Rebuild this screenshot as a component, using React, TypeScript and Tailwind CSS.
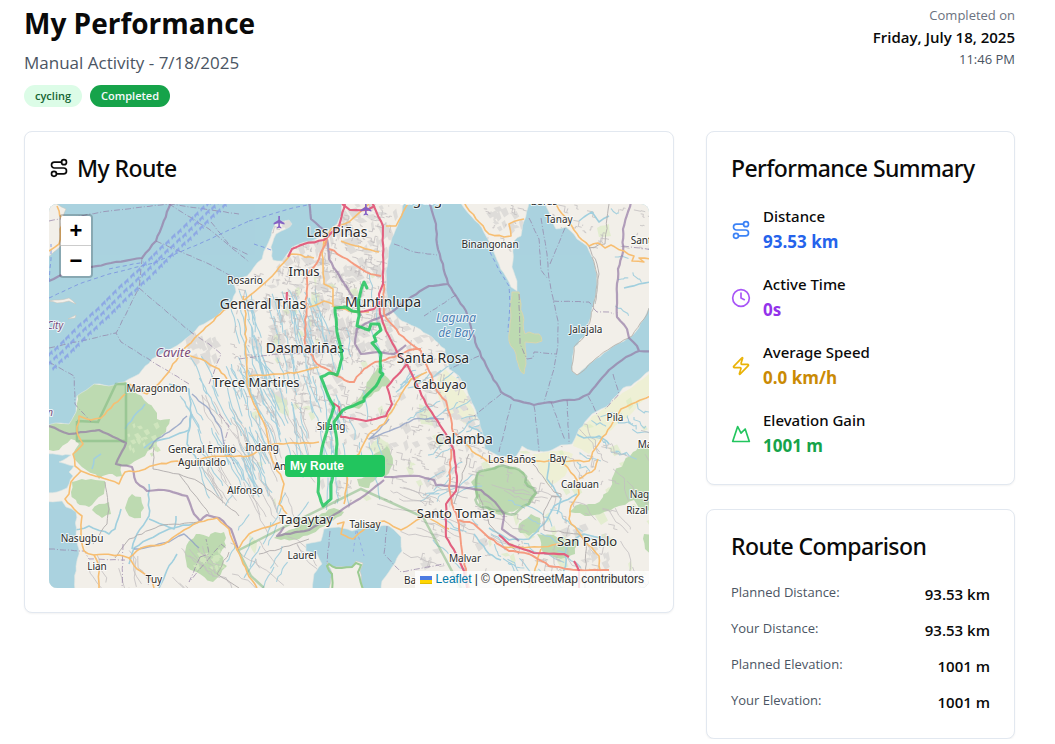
import React from "react";
import { Clock, Route, Zap } from "lucide-react";

type Point = [number, number];

function seeded(seed: number) {
  let s = seed;
  return () => {
    s = (s * 16807) % 2147483647;
    return s / 2147483647;
  };
}

function parse(points: string): Point[] {
  return points.split(" ").map((p) => p.split(",").map(Number) as Point);
}

/* Subdivides a polyline and shakes the new vertices, for coasts and roads. */
function rough(points: string, amount = 1.2, closed = false): string {
  const pts = parse(points);
  const rnd = seeded(pts.length * 977 + Math.round(Math.abs(pts[0][0] * 31 + pts[0][1] * 7)) + 11);
  const out: string[] = [];
  const count = closed ? pts.length : pts.length - 1;
  for (let i = 0; i < count; i++) {
    const [x1, y1] = pts[i];
    const [x2, y2] = pts[(i + 1) % pts.length];
    const steps = Math.max(1, Math.round(Math.hypot(x2 - x1, y2 - y1) / 5));
    for (let k = 0; k < steps; k++) {
      const t = k / steps;
      const j = k === 0 ? 0 : amount;
      out.push(`${(x1 + (x2 - x1) * t + (rnd() - 0.5) * 2 * j).toFixed(1)},${(y1 + (y2 - y1) * t + (rnd() - 0.5) * 2 * j).toFixed(1)}`);
    }
  }
  if (!closed) out.push(pts[pts.length - 1].join(","));
  return `M${out.join("L")}${closed ? "Z" : ""}`;
}

/* Short wandering strokes inside a box, heading roughly along (dx, dy). */
function strokes(seed: number, n: number, box: number[], dx: number, dy: number, steps: number, spread: number): string {
  const rnd = seeded(seed * 7919);
  const [x0, y0, x1, y1] = box;
  let d = "";
  for (let i = 0; i < n; i++) {
    let x = x0 + rnd() * (x1 - x0);
    let y = y0 + rnd() * (y1 - y0);
    d += `M${x.toFixed(1)},${y.toFixed(1)}`;
    for (let k = 0; k < steps; k++) {
      x += dx + (rnd() - 0.5) * spread;
      y += dy + (rnd() - 0.5) * spread;
      d += `L${x.toFixed(1)},${y.toFixed(1)}`;
    }
  }
  return d;
}

/* Right-angled street fragments for built-up districts. */
function streets(seed: number, n: number, box: number[], size: number): string {
  const rnd = seeded(seed * 7919);
  const [x0, y0, x1, y1] = box;
  let d = "";
  for (let i = 0; i < n; i++) {
    const x = x0 + rnd() * (x1 - x0);
    const y = y0 + rnd() * (y1 - y0);
    const w = (rnd() - 0.3) * size;
    const h = (rnd() - 0.3) * size;
    d += `M${x.toFixed(1)},${y.toFixed(1)}l${w.toFixed(1)},${(w * 0.2).toFixed(1)}l${(-h * 0.2).toFixed(1)},${h.toFixed(1)}l${(w * 0.6).toFixed(1)},${(w * 0.15).toFixed(1)}`;
  }
  return d;
}

function blobs(seed: number, n: number, box: number[], size: number): string {
  const rnd = seeded(seed * 7919);
  const [x0, y0, x1, y1] = box;
  let d = "";
  for (let i = 0; i < n; i++) {
    const x = x0 + rnd() * (x1 - x0);
    const y = y0 + rnd() * (y1 - y0);
    const a = 2 + rnd() * size;
    const b = 2 + rnd() * size;
    d += `M${x.toFixed(1)},${y.toFixed(1)}l${a.toFixed(1)},${(-b * 0.4).toFixed(1)}l${(a * 0.5).toFixed(1)},${b.toFixed(1)}l${(-a * 0.8).toFixed(1)},${(b * 0.5).toFixed(1)}Z`;
  }
  return d;
}

const MANILA_BAY =
  "-6,-6 292,-6 293,10 288,20 277,28 267,35 243,43 238,50 233,57 224,56 222,43 227,30 237,25 243,20 240,16 228,17 223,27 220,37 215,47 213,55 205,63 198,72 190,74 185,80 187,88 183,98 175,105 165,114 150,122 143,130 133,138 118,147 103,155 90,170 75,178 60,182 45,180 28,192 27,208 20,220 7,219 -6,222";
const LAGUNA =
  "357,-6 350,17 345,30 340,43 337,67 338,97 343,107 353,117 367,123 383,133 396,145 400,165 410,172 418,186 427,207 433,227 436,245 450,252 466,254 473,242 484,247 500,247 512,241 523,240 530,225 543,210 557,203 567,192 574,184 582,182 593,173 606,160 606,103 600,104 595,115 583,132 563,143 543,158 528,171 523,167 525,143 535,133 542,113 547,90 548,70 543,53 538,42 528,35 517,23 507,25 503,17 495,-6 481,-6 475,17 472,32 465,37 463,63 468,77 468,87 462,83 457,73 450,60 443,43 437,32 430,20 420,10 408,-6";
const TAAL =
  "257,340 272,337 275,325 290,323 303,327 317,322 340,322 352,333 353,347 343,363 333,377 332,390 263,390 265,370 273,360 268,350 257,347";
const WEST_SEA = "-6,298 13,297 17,303 27,308 27,330 30,350 27,362 25,390 -6,390";
const WEST_COVE = "-6,250 22,251 10,258 25,262 20,268 24,272 18,284 8,288 -6,289";

const GREENS = [
  "28,190 45,180 60,182 75,176 88,190 105,205 108,215 121,215 117,228 107,240 96,252 82,260 72,262 73,272 60,270 50,275 30,260 24,250 30,240 22,235 10,246 -6,248 -6,222 7,219 20,220 27,208",
  "23,278 42,275 56,277 55,290 47,296 40,303 28,299 22,288",
  "43,306 50,300 60,298 62,310 53,314",
  "78,298 83,290 92,293 95,304 92,314 80,312 76,304",
  "140,337 147,330 160,333 166,328 175,328 177,342 171,350 178,362 164,378 151,370 138,363 136,348",
  "422,278 429,268 437,266 450,262 466,264 475,268 481,278 488,289 483,298 469,305 454,311 443,308 430,300",
  "470,320 482,310 491,314 490,328 480,332 471,329",
  "546,300 559,288 565,270 575,258 584,248 590,242 606,240 606,306 590,304 585,296 570,302 555,308 540,312 520,308 531,300",
  "342,178 330,187 315,198 310,205 300,203 312,192 320,176 329,163",
  "338,242 344,260 337,272 320,270 315,262 325,250",
  "225,334 240,326 260,316 285,304 295,308 280,318 262,330 250,335 232,336",
  "308,275 322,272 331,270 320,284 310,282",
  "488,330 515,334 530,335 526,350 512,355 495,350",
  "595,330 606,330 606,350 596,345",
];

const PALE = [
  "548,24 560,20 562,32 550,33",
  "225,132 231,128 230,148 224,150",
  "223,188 238,196 240,212 230,208",
  "262,88 271,90 268,104 262,102",
  "370,200 382,206 384,222 372,220",
  "318,245 330,232 340,240 332,252",
  "200,330 208,338 206,350 201,342",
];

const FARMLAND = [
  "606,165 582,184 570,192 557,203 543,212 530,226 524,242 540,250 550,236 566,222 580,212 590,200 606,186",
  "396,165 408,175 418,192 428,215 420,222 400,210 390,195 388,175",
  "484,250 512,246 524,250 516,272 500,282 490,268",
];

const BOUNDARIES = [
  "0,77 10,72 42,63 62,59 93,54 107,37 122,-2",
  "260,-2 262,15 275,26 278,35 280,55 292,75 303,92 312,112",
  "380,-2 387,20 388,40 399,80 380,82 362,93 341,109 320,118 308,125 306,140 312,150 330,148 345,150 357,141",
  "399,80 407,92 417,107 428,143 440,167 452,188 465,196 485,201 510,197 530,195 540,190 560,166 577,153 590,147",
  "582,-2 574,25 574,48 569,65 568,90 568,113 578,125 580,134 588,142 590,147 606,147",
  "0,222 20,230 42,227 50,226 77,239 67,260 83,263 87,278 98,287 115,286 138,292 145,310 151,317",
  "151,317 158,311 170,314 182,325 189,346",
  "235,323 228,332 260,326 290,308 320,288 335,276",
  "335,273 370,272 385,276 387,281 410,283 432,286 446,298 455,310 453,325 470,337",
];

const DASHED = [
  "0,17 60,7 120,0 190,10",
  "120,0 160,25 200,58",
  "162,18 181,42 200,51",
  "107,37 160,60 187,75",
  "93,54 90,84 67,129 72,138 112,163 140,180",
  "90,84 143,129 160,140 172,150 160,180",
  "0,144 67,129",
  "0,158 25,172 26,200 42,218",
  "345,40 365,48 388,51",
  "407,91 375,112",
  "430,152 400,165",
  "452,190 425,212",
  "480,14 490,35 492,66 499,75",
  "492,14 498,50 500,75 509,117 509,140 505,165 495,198",
  "504,97 540,98 548,108 560,108 565,110",
  "516,24 501,60",
  "470,90 471,140 478,155 484,154 485,148 508,150",
  "462,200 456,225 450,248",
  "485,202 488,225 490,248",
  "502,198 516,236",
  "518,196 520,240",
  "539,192 552,218",
  "564,170 570,190 556,205",
  "574,42 606,46",
  "0,345 36,347 40,355 76,356",
  "151,353 160,350 157,335",
  "151,353 140,378 172,340 178,345",
  "74,340 73,384",
  "281,327 278,360",
  "338,322 335,350 352,368 395,360",
  "170,210 180,222 175,240 185,260",
  "190,155 230,150 290,148",
];

const ROADS_ORANGE = [
  "0,47 10,40 13,15 8,2",
  "200,92 188,100 175,106 150,130 138,142 130,152 113,176 98,190 80,180",
  "200,92 220,75 238,55 242,50 265,54",
  "137,150 152,155 170,165 178,175",
  "76,190 62,204 52,214 42,216 30,212 28,228 34,240 24,250 26,262 32,267 60,276 70,280 76,268 90,267 106,261 128,257 142,260 160,253 200,252 225,240 270,238",
  "32,267 22,278 20,290 16,295 25,305 33,312 32,330 35,347 45,351 70,351 80,354 92,344 115,340 135,326 150,318 168,314 180,325 188,346 200,330 232,318",
  "188,346 198,368 208,384",
  "45,351 50,362 50,384",
  "80,354 88,365 100,372 105,384",
  "194,92 196,100 198,180 203,195 213,215 218,230 222,252 235,280 230,300 238,310",
  "260,103 275,97 284,100",
  "276,27 273,50 275,80 284,85 284,102 300,107 320,108",
  "292,37 330,48",
  "320,0 300,18 282,25 275,40",
  "200,172 230,170 250,168 270,163",
  "360,-2 347,22 342,22 337,22",
  "415,-2 427,15 440,30 455,33 462,32 460,20 475,15",
  "507,0 520,18 530,33 540,42 549,39 556,44 562,41 575,47 585,52 583,57 595,58 590,54 606,55",
  "417,240 427,250 438,257 460,258 490,257 540,257 546,245 562,222 572,205 606,190",
  "515,260 528,276 530,290 522,302 520,315 535,336 550,352 551,366 530,367",
  "530,275 546,265 549,255",
  "288,320 295,318 292,330 304,335 318,322 335,317 352,326 375,312 400,325",
  "378,168 362,175 350,195 335,220 320,230 310,250 297,262 298,280 295,300",
  "455,343 490,343 513,340",
  "480,384 492,345",
];

const ROADS_MINOR = [
  "56,278 60,305 58,320 44,340",
  "105,243 104,265 130,270 145,290 160,310",
  "130,270 150,278 190,312",
  "66,354 80,335 110,322 150,318",
  "180,348 168,370 190,384",
  "210,350 240,342 260,335",
  "420,250 405,300",
  "484,260 505,288 512,290 512,293 503,292 495,307 495,326 530,330 537,340 536,384",
  "430,290 440,320 470,350",
  "540,42 548,60 550,70 546,100",
  "560,0 556,40 540,44",
];

const ROADS_SALMON = [
  "278,35 270,55 258,72 256,140 268,160 276,164 300,178",
  "280,45 298,55 317,68 332,72",
  "300,178 305,178 315,165 326,158 345,153 360,146 372,145",
  "335,80 335,110 350,130 362,140 372,147 380,167 388,187 397,197 403,220 404,228",
  "402,245 400,283 403,300 410,320 413,347 420,384",
  "404,228 417,240",
  "410,316 425,320 440,334 460,347 480,350 500,362 530,366 560,366",
];

const ROADS_RED = [
  "323,-2 334,22 334,80 330,90 331,110 337,127 348,148 358,160 377,200 397,230 405,247 408,277 407,287 397,300 397,333 407,350 415,367 418,384",
  "293,0 301,6 318,6 326,2",
  "239,53 243,45 255,40 275,36 290,22 296,0",
  "310,108 325,105 331,97",
  "358,160 338,183 343,200 337,212 317,217 300,214 292,213 290,203 284,199",
  "450,331 460,340 485,349 515,350 520,353",
  "525,357 530,367 530,384",
  "238,88 238,97",
];

const RIVERS = [
  "0,325 20,328 40,322 60,330 66,325 72,305",
  "83,345 88,330 100,312 100,280",
  "100,315 125,325 127,312",
  "80,360 85,344 100,335 120,325 150,318",
  "128,350 118,366 110,384",
  "95,244 103,238 120,234 140,226 143,210",
  "43,265 45,255 52,250",
  "76,225 85,212 96,200",
  "120,180 140,185 142,210 138,240 150,260",
  "420,222 436,230 450,226",
  "525,228 535,234 550,232 560,240",
  "440,324 460,336 480,335 495,320 505,302 528,290",
  "500,255 498,275 512,295 508,310",
  "530,17 535,13 543,8 550,18 560,12",
  "575,84 590,80 606,78",
  "425,330 440,350 452,356",
  "515,372 518,340 535,330 555,335",
];

const RIVERS_DARK = [
  "150,344 135,330 120,338 105,342 85,345",
  "100,245 108,235 128,222 138,212",
  "143,190 160,205 172,225 176,245",
  "340,215 320,235 345,225 365,215 395,215",
];

const ROUTE =
  "318,84 315,78 312,86 309,98 310,112 308,122 320,126 322,120 330,120 332,126 325,132 327,137 323,139 329,146 332,150 331,168 334,170 327,182 315,194 315,197 304,202 294,206 285,218 288,240 286,262 282,280 282,295 274,302 269,288 270,262 273,244 279,223 280,217 285,203 279,191 272,173 280,169 288,171 293,154 291,140 288,128 286,104 297,103 303,107 310,108";

interface Label {
  text: string;
  x: number;
  y: number;
  size?: number;
  tone?: "place" | "water" | "region";
}

const LABELS: Label[] = [
  { text: "Las Piñas", x: 288, y: 33, size: 14 },
  { text: "Imus", x: 255, y: 72, size: 13 },
  { text: "Muntinlupa", x: 334, y: 103, size: 14 },
  { text: "Rosario", x: 196, y: 80 },
  { text: "General Trias", x: 214, y: 105, size: 14 },
  { text: "Dasmariñas", x: 256, y: 149, size: 14 },
  { text: "Santa Rosa", x: 384, y: 159, size: 14 },
  { text: "Cabuyao", x: 391, y: 185, size: 13 },
  { text: "Trece Martires", x: 207, y: 183, size: 13 },
  { text: "Calamba", x: 415, y: 240, size: 14 },
  { text: "Tagaytay", x: 257, y: 320, size: 13 },
  { text: "Santo Tomas", x: 407, y: 314, size: 13 },
  { text: "San Pablo", x: 538, y: 342, size: 13 },
  { text: "Maragondon", x: 108, y: 188 },
  { text: "Binangonan", x: 441, y: 44 },
  { text: "Tanay", x: 510, y: 19 },
  { text: "Baras", x: 495, y: 1 },
  { text: "Santa", x: 595, y: 40 },
  { text: "Jalajala", x: 537, y: 129 },
  { text: "Silang", x: 282, y: 226 },
  { text: "Indang", x: 213, y: 247 },
  { text: "An", x: 231, y: 266 },
  { text: "General Emilio", x: 153, y: 249 },
  { text: "Aguinaldo", x: 153, y: 262 },
  { text: "Alfonso", x: 196, y: 290 },
  { text: "Nasugbu", x: 33, y: 338 },
  { text: "Lian", x: 48, y: 366 },
  { text: "Tuy", x: 105, y: 379 },
  { text: "Laurel", x: 253, y: 355 },
  { text: "Talisay", x: 316, y: 324 },
  { text: "Malvar", x: 416, y: 358 },
  { text: "Los Baños", x: 463, y: 259 },
  { text: "Bay", x: 509, y: 258 },
  { text: "Pila", x: 566, y: 217 },
  { text: "Calauan", x: 531, y: 284 },
  { text: "Magdalena", x: 615, y: 244 },
  { text: "Nagcarlan", x: 605, y: 294 },
  { text: "Rizal", x: 588, y: 310 },
  { text: "Ba", x: 361, y: 380 },
  { text: "Taguig", x: 371, y: 0, size: 14 },
  { text: "Laguna", x: 407, y: 118, size: 12, tone: "water" },
  { text: "de Bay", x: 407, y: 133, size: 12, tone: "water" },
  { text: "Cavite", x: 124, y: 153, size: 13, tone: "region" },
  { text: "Cavite City", x: -9, y: 125, tone: "region" },
  { text: "Bataan", x: -12, y: 212, tone: "region" },
];

const TONES = { place: "#2b2b2b", water: "#4d80b3", region: "#7a4e7c" };

const SHIPPING = Array.from({ length: 30 }, (_, i) => {
  const t = i / 29;
  return [Math.round(t * 170), Math.round(158 - t * 162)] as Point;
});

interface LinesProps {
  items: string[];
  color: string;
  width: number;
  dash?: string;
  opacity?: number;
  shake?: number;
}

function Lines({ items, color, width, dash, opacity, shake = 0.8 }: LinesProps) {
  return (
    <g fill="none" stroke={color} strokeWidth={width} strokeDasharray={dash} opacity={opacity} strokeLinejoin="round">
      {items.map((p) => (
        <path key={p} d={rough(p, shake)} />
      ))}
    </g>
  );
}

function RouteMap() {
  return (
    <svg className="block h-full w-full" viewBox="0 0 600 384" preserveAspectRatio="xMidYMid slice" role="img" aria-label="Map of the route">
      <rect width="600" height="384" fill="#f2efe9" />
      <g fill="#eef0d5">
        {FARMLAND.map((p) => (
          <path key={p} d={rough(p, 1, true)} />
        ))}
      </g>
      <g fill="#dedcd9">
        <path d={blobs(7, 170, [225, 0, 345, 150], 8)} />
        <path d={blobs(9, 60, [185, 75, 290, 200], 7)} />
        <path d={blobs(13, 55, [335, 120, 425, 240], 7)} />
        <path d={blobs(15, 30, [370, 230, 430, 384], 6)} />
        <path d={blobs(17, 22, [135, 130, 165, 158], 8)} />
        <path d={blobs(19, 25, [270, 180, 340, 290], 6)} />
        <path d={blobs(21, 16, [430, 0, 475, 30], 6)} />
        <path d={blobs(23, 20, [510, 320, 560, 360], 6)} />
        <path d="M0,25L8,30L10,38L0,42Z" />
      </g>
      <g fill="#d9ebc0" opacity="0.6">
        <path d={blobs(31, 35, [200, 70, 400, 300], 6)} />
        <path d={blobs(33, 45, [430, 190, 600, 384], 7)} />
        {PALE.map((p) => (
          <path key={p} d={rough(p, 1, true)} />
        ))}
      </g>
      <g fill="#bddab1">
        {GREENS.map((p) => (
          <path key={p} d={rough(p, 1.5, true)} />
        ))}
      </g>
      <g fill="#cfe5bd">
        <path d={blobs(41, 22, [75, 215, 105, 250], 3)} />
        <path d={blobs(43, 18, [142, 345, 170, 366], 3)} />
      </g>
      <g fill="none" stroke="#a6d0de" strokeWidth="1.1">
        <path d={strokes(51, 75, [180, 80, 280, 245], 1.2, 5, 7, 3)} />
        <path d={strokes(52, 42, [130, 150, 215, 260], 2.5, 5, 7, 3.5)} />
        <path d={strokes(53, 26, [270, 60, 330, 290], 1, 6, 5, 4)} />
        <path d={strokes(54, 30, [345, 170, 420, 300], 4, -2.5, 5, 5)} />
        <path d={strokes(55, 24, [380, 290, 540, 370], 3, 2.5, 5, 5)} />
        <path d={strokes(56, 12, [500, 200, 590, 260], 3, 1, 6, 7)} />
        <path d={strokes(57, 14, [185, 280, 260, 370], -2, 4, 5, 3)} />
        <path d={strokes(58, 6, [560, 0, 600, 120], 3, 1, 5, 5)} />
      </g>
      <g fill="none" stroke="#c3bfc0" strokeWidth="0.8">
        <path d={streets(61, 300, [225, 0, 342, 165], 10)} />
        <path d={streets(62, 150, [180, 70, 300, 210], 10)} />
        <path d={streets(63, 120, [335, 110, 440, 260], 11)} />
        <path d={streets(64, 90, [370, 240, 560, 384], 15)} />
        <path d={streets(65, 50, [430, 0, 600, 45], 10)} />
        <path d={strokes(66, 38, [150, 180, 250, 290], 2.5, 5, 7, 4)} />
        <path d={strokes(67, 14, [120, 330, 250, 384], 4, 4, 6, 6)} />
        <path d={strokes(68, 20, [320, 280, 480, 350], 6, 2, 6, 6)} />
        <path d={strokes(69, 22, [500, 190, 600, 384], 3, 4, 6, 8)} />
        <path d={streets(70, 60, [265, 180, 350, 300], 11)} />
        <path d={strokes(71, 9, [40, 345, 140, 384], 2, 6, 5, 6)} />
      </g>
      <Lines items={RIVERS} color="#a1cfde" width={1.6} />
      <Lines items={RIVERS_DARK} color="#8f9fc4" width={1.4} opacity={0.8} />
      <Lines items={ROADS_MINOR} color="#b0acac" width={0.9} />
      <g fill="#aad3df" stroke="#dfe6e2" strokeWidth="0.6">
        {[MANILA_BAY, LAGUNA, TAAL, WEST_SEA, WEST_COVE].map((p) => (
          <path key={p} d={rough(p, 0.8, true)} />
        ))}
      </g>
      <g fill="#f2efe9" stroke="#c9c2b8" strokeWidth="0.5">
        <path d={rough("-4,-4 8,0 17,5 12,20 14,38 5,48 -4,56", 1, true)} />
        <path d={rough("0,97 10,96 20,94 27,100 20,97 8,99", 0.5, true)} />
        <path d={rough("19,115 27,111 26,114", 0.3, true)} />
        <path d={rough("278,358 283,363 303,363 307,357 314,359 311,367 315,388 280,388 283,370", 1, true)} />
      </g>
      <path d={rough("528,171 523,167 525,143 535,133 542,113 547,90 548,70 543,53", 0.8)} fill="none" stroke="#b9b3ad" strokeWidth="0.9" />
      <path d={rough("528,171 543,158 563,143 583,132 595,115 600,104", 0.8)} fill="none" stroke="#b9b3ad" strokeWidth="0.9" />
      <path d={rough("463,88 461,120 460,137 467,150 470,163 475,170 477,160 477,150 476,138 487,139 493,137 490,130 480,128 476,130 472,100 470,88", 1, true)} fill="#bddab1" stroke="#d8d5b0" />
      <path d={rough("283,388 283,370 278,362 280,360 287,364 303,363 307,359 312,361 309,368 315,388", 0.6)} fill="none" stroke="#9bcb92" strokeWidth="2" />

      <g fill="none" stroke="#79b579" strokeWidth="2.5" opacity="0.5">
        <path d="M28,217V237H77V180H67L49,218L28,217" />
        <path d={rough("429,268 437,266 450,262 466,264 475,270 479,282 487,289 480,300 466,310 443,306 428,300 427,282 429,268", 1.5)} />
        <path d="M190,346L225,328L312,285L374,313L412,384" />
        <path d="M189,346L202,372L215,384" />
      </g>

      <Lines items={DASHED} color="#9582a8" width={0.9} dash="6 2 1 2" opacity={0.8} shake={0.3} />
      <Lines items={BOUNDARIES} color="#957ba5" width={2.2} opacity={0.7} shake={0.5} />
      <Lines
        items={["0,94 30,80 60,70 105,59 150,40 200,17", "0,78 2,55 2,40", "60,65 95,58", "200,17 240,5 262,0", "205,40 222,46", "441,48 450,66 460,82 461,100 459,128"]}
        color="#7d95e0"
        width={0.9}
        dash="4 3"
        shake={0.2}
      />
      <Lines items={["307,327 304,350", "308,327 315,352"]} color="#8fa2e4" width={0.8} dash="3 3" shake={0} />

      <g fill="#849be6" opacity="0.75">
        {SHIPPING.map(([x, y]) => (
          <path key={x} d={`M${x - 7},${y - 2}l4,-4l1,5l-2,-1l-2,3ZM${x - 2},${y + 2}l4,-4l1,5l-2,-1l-2,3ZM${x + 3},${y + 6}l4,-4l1,5l-2,-1l-2,3Z`} />
        ))}
      </g>

      <Lines items={ROADS_ORANGE} color="#f7be72" width={1.6} />
      <Lines items={ROADS_SALMON} color="#f59b80" width={1.9} />
      <Lines items={ROADS_RED} color="#e2607f" width={2.1} shake={0.4} />

      <g fill="#8461c4">
        <path d="M229.3,12h1.6v4l4.6,3v1.4l-4.6,-1.2v3l1.5,1.2v1l-2.3,-.6l-2.3,.6v-1l1.5,-1.2v-3l-4.7,1.2v-1.4l4.7,-3Z" />
        <path d="M316,-1h1.7v4l4.6,3v1.4l-4.6,-1.2v3l1.5,1.2v1l-2.3,-.6l-2.3,.6v-1l1.4,-1.2v-3l-4.6,1.2v-1.4l4.6,-3Z" />
      </g>

      <g fontFamily='"Noto Sans", sans-serif' textAnchor="middle" stroke="#ffffff" strokeOpacity="0.75" strokeWidth="2" strokeLinejoin="round" paintOrder="stroke">
        {LABELS.map((l) => (
          <text key={l.text} x={l.x} y={l.y} fontSize={l.size ?? 10} fill={TONES[l.tone ?? "place"]} fontStyle={l.tone ? "italic" : undefined}>
            {l.text}
          </text>
        ))}
      </g>

      <path d={rough(ROUTE, 0.4)} fill="none" stroke="#22c55e" strokeWidth="3" strokeOpacity="0.85" strokeLinejoin="round" strokeLinecap="round" />
    </svg>
  );
}

/* Twin-peak outline used for elevation. */
function Peaks({ className }: { className?: string }) {
  return (
    <svg className={className} viewBox="0 0 24 24" fill="none" stroke="currentColor" strokeWidth="2" strokeLinecap="round" strokeLinejoin="round" aria-hidden="true">
      <path d="m8 3 4 8 5-5 5 15H2L8 3z" />
    </svg>
  );
}

function Card({ children }: { children: React.ReactNode }) {
  return <section className="rounded-lg border border-[#e2e8f0] bg-white p-6 shadow-xs">{children}</section>;
}

function CardTitle({ children }: { children: React.ReactNode }) {
  return <h2 className="mb-6 flex items-center gap-2 font-['Segoe_UI','Noto_Sans',sans-serif] text-[23px] leading-6 font-medium tracking-tight">{children}</h2>;
}

const STATS = [
  { label: "Distance", value: "93.53 km", Icon: Route, icon: "text-[#3b82f6]", tone: "text-[#2563eb]" },
  { label: "Active Time", value: "0s", Icon: Clock, icon: "text-[#a855f7]", tone: "text-[#9333ea]" },
  { label: "Average Speed", value: "0.0 km/h", Icon: Zap, icon: "text-[#eab308]", tone: "text-[#ca8a04]" },
  { label: "Elevation Gain", value: "1001 m", Icon: Peaks, icon: "text-[#22c55e]", tone: "text-[#16a34a]" },
];

const COMPARISON = [
  ["Planned Distance:", "93.53 km"],
  ["Your Distance:", "93.53 km"],
  ["Planned Elevation:", "1001 m"],
  ["Your Elevation:", "1001 m"],
];

export default function App() {
  return (
    <main className="bg-white pt-[5px] pr-10 pl-6 font-['Segoe_UI','Open_Sans','Noto_Sans',sans-serif] text-[#0a0a0a]">
      <header className="mb-6 flex items-start justify-between">
        <div>
          <h1 className="text-[28px] leading-9 font-bold">My Performance</h1>
          <p className="mt-2 text-[17px] leading-7 text-[#4b5563]">Manual Activity - 7/18/2025</p>
          <div className="mt-2 flex gap-2 text-[11px] leading-4 font-semibold">
            <span className="rounded-full border border-transparent bg-[#dcfce7] px-2.5 py-0.5 text-[#166534]">cycling</span>
            <span className="rounded-full border border-transparent bg-[#16a34a] px-2.5 py-0.5 text-[#f8fafc]">Completed</span>
          </div>
        </div>
        <div className="text-right">
          <p className="text-[13px] leading-5 text-[#6b7280]">Completed on</p>
          <p className="text-[15px] leading-6 font-semibold">Friday, July 18, 2025</p>
          <p className="text-[13px] leading-5 text-[#4b5563]">11:46 PM</p>
        </div>
      </header>

      <div className="grid grid-cols-3 items-start gap-8">
        <div className="col-span-2">
          <Card>
            <CardTitle>
              <Route className="size-5" aria-hidden="true" />
              My Route
            </CardTitle>
            <div className="relative h-96 overflow-hidden rounded-lg bg-[#aad3df] font-['Liberation_Sans',sans-serif] text-xs">
              <RouteMap />
              <div className="absolute top-2.5 left-2.5 flex flex-col overflow-hidden rounded border-2 border-black/20 bg-clip-padding text-black">
                <button type="button" aria-label="Zoom in" className="grid size-[30px] place-items-center border-b border-[#cccccc] bg-white text-[22px] leading-none font-bold">
                  +
                </button>
                <button type="button" aria-label="Zoom out" className="grid size-[30px] place-items-center bg-white text-[22px] leading-none font-bold">
                  −
                </button>
              </div>
              <div className="absolute top-[251px] left-[236px] w-[100px] rounded bg-[#22c55e] px-[5px] py-[3px] leading-4 font-bold text-white">My Route</div>
              <div className="absolute right-0 bottom-0 flex items-center gap-[3px] bg-white/80 px-[5px] leading-[17px] text-[#333333]">
                <a href="https://leafletjs.com" className="flex items-center gap-1 text-[#0078a8]">
                  <svg width="12" height="8" viewBox="0 0 12 8" aria-hidden="true">
                    <path fill="#4C7BE1" d="M0 0h12v4H0z" />
                    <path fill="#FFD500" d="M0 4h12v3H0z" />
                    <path fill="#E0BC00" d="M0 7h12v1H0z" />
                  </svg>
                  Leaflet
                </a>
                <span>| © OpenStreetMap contributors</span>
              </div>
            </div>
          </Card>
        </div>

        <div className="space-y-6">
          <Card>
            <CardTitle>Performance Summary</CardTitle>
            <div className="space-y-4">
              {STATS.map(({ label, value, Icon, icon, tone }) => (
                <div key={label} className="flex items-center gap-3">
                  <Icon className={`size-5 ${icon}`} aria-hidden="true" />
                  <div>
                    <p className="font-['Segoe_UI','Noto_Sans',sans-serif] text-[15px] leading-6 font-medium">{label}</p>
                    <p className={`text-[17px] leading-7 font-bold ${tone}`}>{value}</p>
                  </div>
                </div>
              ))}
            </div>
          </Card>

          <Card>
            <CardTitle>Route Comparison</CardTitle>
            <dl className="space-y-3">
              {COMPARISON.map(([label, value]) => (
                <div key={label} className="flex justify-between">
                  <dt className="text-[13px] leading-5 text-[#4b5563]">{label}</dt>
                  <dd className="text-[15px] leading-6 font-semibold">{value}</dd>
                </div>
              ))}
            </dl>
          </Card>
        </div>
      </div>
    </main>
  );
}
